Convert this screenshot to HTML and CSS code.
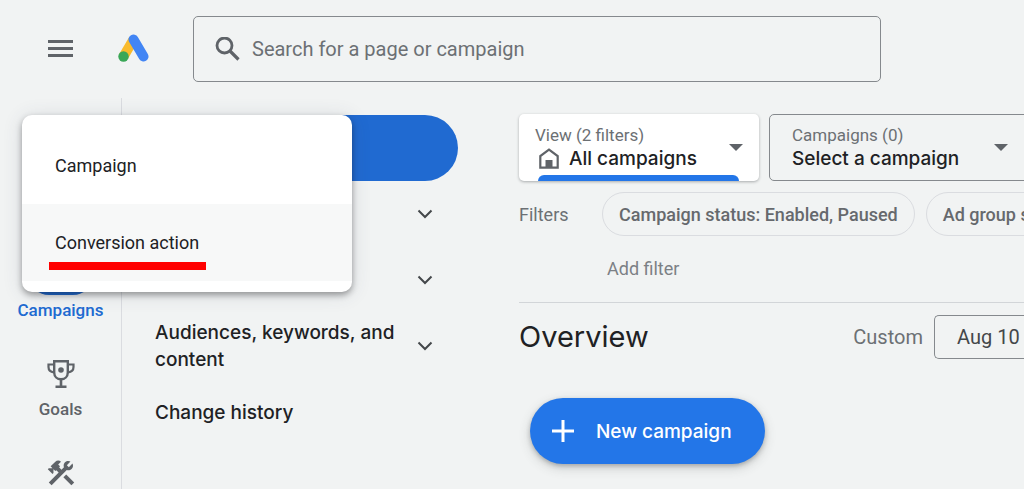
FILE: index.html
```html
<!DOCTYPE html>
<html lang="en">
<head>
    <meta charset="UTF-8">
    <meta name="viewport" content="width=device-width, initial-scale=1.0">
    <title>Overview - Campaigns</title>
    <link rel="stylesheet" href="styles.css">
</head>
<body>
    <header class="topbar">
        <button class="icon-btn menu-btn" aria-label="Main menu">
            <svg width="26" height="18" viewBox="0 0 26 18"><path d="M0 0h25v3H0zM0 7h25v3H0zM0 14h25v3H0z" fill="#5f6368"/></svg>
        </button>
        <a class="logo" href="#" aria-label="Home">
            <svg width="32" height="30" viewBox="0 0 32 30">
                <path d="M15.500 5.500L5.500 22.500" stroke="#f9bb2d" stroke-width="10" fill="none"/>
                <path d="M15.500 5.500l10 17" stroke="#4285f4" stroke-width="10" stroke-linecap="round" fill="none"/>
                <circle cx="5.500" cy="22.500" r="5.200" fill="#3aa757"/>
            </svg>
        </a>
        <div class="search">
            <svg width="25" height="24" viewBox="0 0 25 24"><circle cx="9.500" cy="8.500" r="7.500" fill="none" stroke="#5f6368" stroke-width="2.800"/><path d="M14.500 13.500l9 9" stroke="#5f6368" stroke-width="3.200"/></svg>
            <input type="text" class="search-input" placeholder="Search for a page or campaign" aria-label="Search for a page or campaign">
        </div>
    </header>

    <div class="layout">
        <nav class="rail">
            <a class="rail-item active" href="#">
                <span class="rail-icon"></span>
                Campaigns
            </a>
            <a class="rail-item" href="#">
                <span class="rail-icon">
                    <svg width="28" height="28" viewBox="0 0 28 28" fill="none" stroke="#5f6368">
                        <path d="M7.200 1.300h13.600v11.200c0 4-3 6.700-6.800 6.700s-6.800-2.700-6.800-6.700z" stroke-width="2.400"/>
                        <path d="M7 4.500H1.500V7c0 3 2.300 5 5.500 5.500M21 4.500h5.500V7c0 3-2.300 5-5.500 5.500" stroke-width="2.200"/>
                        <path d="M14 19v7M8.500 26.700h11" stroke-width="2.600"/>
                        <circle cx="14" cy="10" r="2.800" fill="#5f6368" stroke="none"/>
                    </svg>
                </span>
                Goals
            </a>
            <a class="rail-item" href="#" aria-label="Tools">
                <span class="rail-icon">
                    <svg width="32" height="32" viewBox="0 0 24 24" fill="#5f6368">
                        <path d="M13.783 15.172l2.121-2.121 5.996 5.996-2.121 2.121z"/>
                        <path d="M17.500 10c1.930 0 3.500-1.570 3.500-3.500 0-.58-.16-1.120-.41-1.600l-2.700 2.700-1.490-1.490 2.700-2.700c-.48-.25-1.020-.41-1.600-.41C15.570 3 14 4.570 14 6.500c0 .41.080.8.210 1.160l-1.850 1.850-1.780-1.780.71-.71-1.410-1.410L12 3.490c-1.170-1.170-3.070-1.170-4.240 0L4.220 7.030l1.410 1.410H2.810l-.71.71 3.540 3.540.71-.71V9.150l1.410 1.410.71-.71 1.780 1.780-7.410 7.410 2.120 2.120L16.340 9.790c.36.130.75.210 1.160.21z"/>
                    </svg>
                </span>
            </a>
        </nav>

        <aside class="sidebar">
            <button class="section-pill" aria-label="Overview"></button>
            <button class="side-item" aria-label="Expand section">
                <span></span>
                <svg class="chevron" width="16" height="10" viewBox="0 0 16 10"><path d="M1.500 1.500L8 8l6.500-6.500"/></svg>
            </button>
            <button class="side-item" aria-label="Expand section">
                <span></span>
                <svg class="chevron" width="16" height="10" viewBox="0 0 16 10"><path d="M1.500 1.500L8 8l6.500-6.500"/></svg>
            </button>
            <button class="side-item">
                <span>Audiences, keywords, and content</span>
                <svg class="chevron" width="16" height="10" viewBox="0 0 16 10"><path d="M1.500 1.500L8 8l6.500-6.500"/></svg>
            </button>
            <a class="side-item" href="#"><span>Change history</span></a>
        </aside>

        <main class="content">
            <div class="pickers">
                <button class="picker selected">
                    <span class="picker-text">
                        <span class="picker-label">View (2 filters)</span>
                        <span class="picker-value">
                            <svg class="home-icon" width="20" height="21" viewBox="0 0 20 21"><path d="M1.300 19.700V8L10 1.500 18.700 8v11.700z" fill="none" stroke="#5f6368" stroke-width="2.200"/><path d="M6.500 12h7v8h-7z" fill="#5f6368"/></svg>
                            All campaigns
                        </span>
                    </span>
                    <svg width="14" height="7" viewBox="0 0 14 7"><path d="M0 0h14L7 7z" fill="#5f6368"/></svg>
                </button>
                <button class="picker">
                    <span class="picker-text">
                        <span class="picker-label">Campaigns (0)</span>
                        <span class="picker-value">Select a campaign</span>
                    </span>
                    <svg width="14" height="7" viewBox="0 0 14 7"><path d="M0 0h14L7 7z" fill="#5f6368"/></svg>
                </button>
            </div>

            <div class="filters">
                <span class="filters-label">Filters</span>
                <button class="chip">Campaign status: Enabled, Paused</button>
                <button class="chip">Ad group status: Enabled, Paused</button>
            </div>
            <button class="add-filter">Add filter</button>

            <div class="overview-bar">
                <h1>Overview</h1>
                <span class="range-label">Custom</span>
                <button class="date-btn">Aug 10</button>
            </div>

            <button class="new-campaign">
                <svg width="22" height="22" viewBox="0 0 22 22"><path d="M11 0v22M0 11h22" stroke="#fff" stroke-width="3"/></svg>
                New campaign
            </button>
        </main>

        <div class="create-menu" role="menu">
            <button class="menu-item" role="menuitem">Campaign</button>
            <button class="menu-item highlighted" role="menuitem">Conversion action</button>
        </div>
    </div>
</body>
</html>
```
FILE: styles.css
```css
:root {
    --bg: #f1f3f3;
    --blue: #2376e8;
    --blue-dark: #206ad1;
    --text: #202124;
    --grey: #5f6368;
    --muted: #6c7074;
    --border: #85898d;
    --line: #dadce0;
    --display-font: Inter, "Open Sans", sans-serif;
}

* {
    box-sizing: border-box;
}

body {
    margin: 0;
    background: var(--bg);
    color: var(--text);
    font-family: Roboto, sans-serif;
    font-size: 18px;
    min-height: 100vh;
    display: flex;
    flex-direction: column;
    overflow: hidden;
}

button {
    font: inherit;
    color: inherit;
    background: none;
    border: none;
    padding: 0;
    text-align: left;
    cursor: pointer;
}

a {
    color: inherit;
    text-decoration: none;
}

svg {
    display: block;
    flex: none;
}

/* top bar */
.topbar {
    display: flex;
    align-items: center;
    height: 98px;
    padding: 0 143px 0 48px;
}

.logo {
    margin: 0 43px 0 44px;
}

.search {
    flex: 1;
    display: flex;
    align-items: center;
    gap: 12px;
    height: 66px;
    padding: 0 21px;
    border: 1px solid var(--border);
    border-radius: 5px;
}

.search-input {
    flex: 1;
    border: none;
    outline: none;
    background: none;
    padding: 0;
    font: inherit;
    font-size: 20px;
    color: var(--text);
}

.search-input::placeholder {
    color: var(--muted);
    opacity: 1;
}

.layout {
    position: relative;
    flex: 1;
    display: flex;
}

/* left rail */
.rail {
    flex: none;
    width: 122px;
    padding-top: 157px;
    border-right: 1px solid var(--line);
}

.rail-item {
    display: flex;
    flex-direction: column;
    align-items: center;
    gap: 5px;
    height: 99px;
    font-size: 17px;
    font-weight: 500;
    line-height: 20px;
    color: var(--grey);
}

.rail-item:last-child {
    height: auto;
}

.rail-icon {
    display: flex;
    align-items: center;
    justify-content: center;
    width: 64px;
    height: 40px;
    border-radius: 20px;
}

.active {
    color: var(--blue-dark);
}

.active .rail-icon {
    background: var(--blue-dark);
}

/* section list */
.sidebar {
    flex: none;
    width: 336px;
    padding-top: 17px;
    margin-right: 61px;
}

.section-pill {
    display: block;
    width: 100%;
    height: 66px;
    border-radius: 0 33px 33px 0;
    background: var(--blue-dark);
}

.side-item {
    display: flex;
    align-items: center;
    justify-content: space-between;
    width: 100%;
    height: 66px;
    padding: 0 25px 0 33px;
    font-family: var(--display-font);
    font-size: 19px;
    font-weight: 500;
    line-height: 27px;
}

.chevron {
    fill: none;
    stroke: #44474a;
    stroke-width: 2;
}

/* main area */
.content {
    flex: 1;
    min-width: 0;
    padding-top: 16px;
}

.pickers {
    display: flex;
    gap: 10px;
}

.picker {
    position: relative;
    flex: none;
    display: flex;
    align-items: center;
    justify-content: space-between;
    width: 262px;
    height: 67px;
    padding: 0 22px;
    border: 1px solid var(--border);
    border-radius: 5px;
}

.picker-text {
    display: flex;
    flex-direction: column;
}

.picker-label {
    font-size: 17px;
    line-height: 22px;
    color: var(--muted);
}

.picker-value {
    display: flex;
    align-items: center;
    gap: 10px;
    font-family: var(--display-font);
    font-size: 19px;
    font-weight: 500;
    line-height: 26px;
}

.home-icon {
    margin-left: 4px;
}

.selected {
    width: 240px;
    padding: 0 16px;
    border: none;
    background: #fff;
    box-shadow: 0 1px 3px rgba(60, 64, 67, 0.4);
}

.selected::after {
    content: "";
    position: absolute;
    left: 19px;
    right: 20px;
    bottom: 0;
    height: 6px;
    border-radius: 6px 6px 0 0;
    background: var(--blue);
}

.filters {
    display: flex;
    align-items: center;
    gap: 11px;
    margin-top: 11px;
    white-space: nowrap;
}

.filters-label {
    flex: none;
    width: 72px;
    color: var(--muted);
}

.chip {
    flex: none;
    height: 44px;
    padding: 0 16px;
    border: 1px solid var(--line);
    border-radius: 22px;
    font-weight: 500;
    color: #66696d;
}

.add-filter {
    display: block;
    margin: 22px 0 0 88px;
    line-height: 22px;
    color: #7c8085;
}

.overview-bar {
    display: flex;
    align-items: center;
    margin-top: 22px;
    padding-top: 12px;
    border-top: 1px solid #d2d5d8;
    white-space: nowrap;
}

.overview-bar h1 {
    flex: 1;
    margin: 0;
    font-family: var(--display-font);
    font-size: 29px;
    font-weight: 400;
    line-height: 44px;
}

.range-label {
    margin-right: 11px;
    font-size: 20px;
    color: var(--muted);
}

.date-btn {
    width: 90px;
    height: 44px;
    padding-left: 22px;
    border: 1px solid var(--border);
    border-right: none;
    border-radius: 5px 0 0 5px;
    font-size: 20px;
    color: #44474a;
}

.new-campaign {
    display: flex;
    align-items: center;
    gap: 22px;
    height: 66px;
    margin: 39px 0 0 11px;
    padding: 0 33px 0 22px;
    border-radius: 33px;
    background: var(--blue);
    color: #fff;
    font-family: var(--display-font);
    font-size: 19px;
    font-weight: 500;
    box-shadow: 0 2px 4px rgba(60, 64, 67, 0.3), 0 4px 12px rgba(60, 64, 67, 0.2);
}

/* create menu */
.create-menu {
    position: absolute;
    top: 17px;
    left: 22px;
    width: 330px;
    padding: 12px 0 11px;
    border-radius: 10px;
    background: #fff;
    box-shadow: 0 3px 6px rgba(0, 0, 0, 0.35), 0 2px 20px rgba(60, 64, 90, 0.14);
}

.menu-item {
    position: relative;
    display: block;
    width: 100%;
    height: 77px;
    padding: 0 33px;
}

.highlighted {
    background: #f7f8f8;
}

.highlighted::after {
    content: "";
    position: absolute;
    left: 27px;
    bottom: 11px;
    width: 157px;
    height: 8px;
    background: #f00;
}
```
